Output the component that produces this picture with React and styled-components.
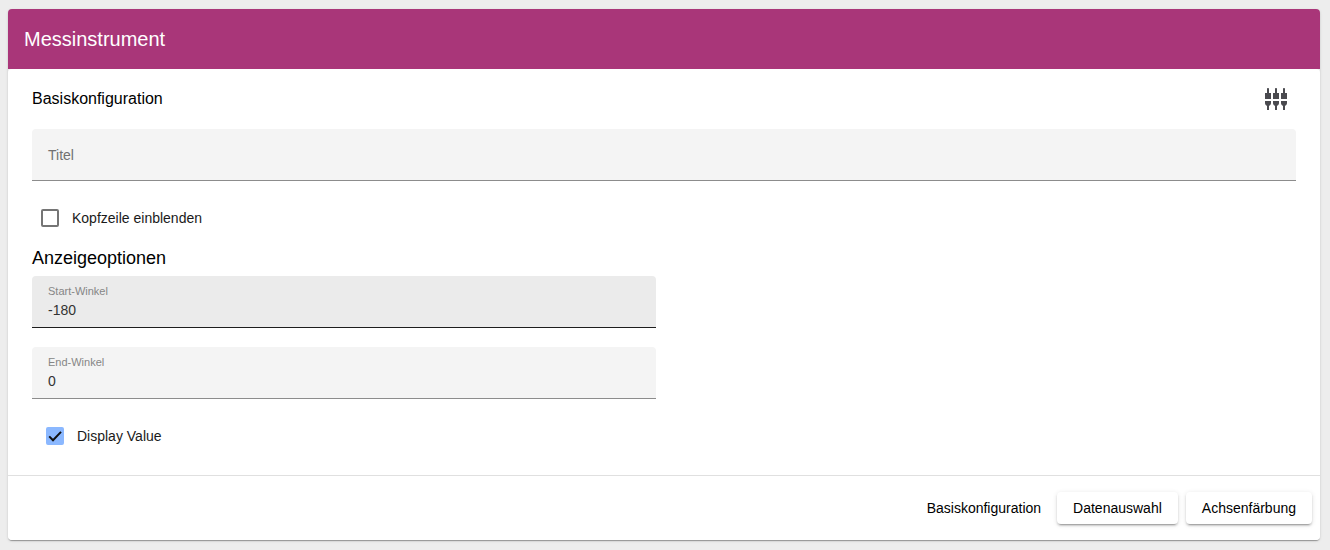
import React, { useState } from "react";
import styled, { createGlobalStyle, css } from "styled-components";
import { MdSettingsInputComponent } from "react-icons/md";

const GlobalStyle = createGlobalStyle`
  *, *::before, *::after { box-sizing: border-box; }
  body {
    margin: 0;
    background: #ededed;
    color: #000;
    font-family: "Liberation Sans", Arial, sans-serif;
    font-size: 14px;
  }
`;

const Page = styled.main`
  padding: 9px 10px 9px 8px;
`;

const Card = styled.section`
  border-radius: 4px;
  box-shadow: 0 2px 1px -1px rgba(0, 0, 0, 0.2), 0 1px 1px rgba(0, 0, 0, 0.14),
    0 1px 3px rgba(0, 0, 0, 0.12);
`;

const Header = styled.header`
  display: flex;
  align-items: center;
  height: 60px;
  padding: 0 16px;
  border-radius: 4px 4px 0 0;
  background: #a93679;
  color: #fff;
`;

const Title = styled.h1`
  margin: 0;
  font-size: 20px;
  font-weight: 400;
  line-height: 32px;
`;

const Panel = styled.div`
  border-radius: 4px;
  background: #fff;
`;

const Content = styled.div`
  padding: 10px 24px 19px;
`;

const TopRow = styled.div`
  display: flex;
  align-items: center;
  justify-content: space-between;
  height: 40px;
  margin-bottom: 10px;
`;

const StepTitle = styled.h2`
  margin: 0;
  font-size: 16px;
  font-weight: 400;
  line-height: 24px;
`;

const IconButton = styled.button`
  display: grid;
  place-items: center;
  width: 40px;
  height: 40px;
  padding: 0;
  border: 0;
  background: transparent;
  color: #4a4a4f;
`;

const SectionTitle = styled.h3`
  margin: 2px 0 0;
  font-size: 18px;
  font-weight: 400;
  line-height: 36px;
`;

const FieldBox = styled.div`
  display: grid;
  align-content: center;
  height: 52px;
  padding: 0 16px ${(p) => (p.$resting ? "0" : "1px")};
  border-bottom: 1px solid ${(p) => (p.$active ? "#1e1e1e" : "#8c8c8c")};
  border-radius: 4px 4px 0 0;
  background: ${(p) => (p.$active ? "#ebebeb" : "#f4f4f4")};
`;

const FieldLabel = styled.label`
  color: #868686;
  font-size: 11px;
  line-height: 17px;

  ${(p) =>
    p.$resting &&
    css`
      grid-area: 1 / 1;
      color: #717171;
      font-size: 14px;
      line-height: 20px;
      pointer-events: none;
    `}
`;

const FieldInput = styled.input`
  width: 100%;
  height: 20px;
  padding: 0;
  border: 0;
  outline: 0;
  background: transparent;
  color: #333;
  font: inherit;
  line-height: 20px;
  ${(p) => p.$resting && "grid-area: 1 / 1;"}
`;

const HalfColumn = styled.div`
  display: grid;
  gap: 19px;
  width: calc(50% - 8px);
`;

const CheckRow = styled.label`
  display: flex;
  align-items: center;
  gap: 13px;
  height: 40px;
  padding-left: ${(p) => (p.$inset ? "14px" : "9px")};
  margin-top: 17px;
  color: #1a1a1a;
  line-height: 20px;
`;

const CheckMark = styled.span`
  display: grid;
  width: 18px;
  height: 18px;

  > * {
    grid-area: 1 / 1;
  }

  svg {
    width: 18px;
    height: 18px;
    pointer-events: none;
  }
`;

const CheckInput = styled.input`
  appearance: none;
  width: 18px;
  height: 18px;
  margin: 0;
  border: 2px solid #757575;
  border-radius: 2px;
  background: #fff;

  &:checked {
    border-color: #8bb8ff;
    background: #8bb8ff;
  }
`;

const Footer = styled.footer`
  display: flex;
  align-items: center;
  justify-content: flex-end;
  gap: 8px;
  padding: 16px 8px;
  border-top: 1px solid #e0e0e0;
`;

const StepButton = styled.button`
  height: 32px;
  padding: 0 ${(p) => (p.$current ? "8px" : "16px")};
  border: 0;
  border-radius: 4px;
  background: #fff;
  color: #000;
  font: inherit;
  line-height: 32px;
  ${(p) =>
    !p.$current &&
    css`
      box-shadow: 0 3px 1px -2px rgba(0, 0, 0, 0.2),
        0 2px 2px rgba(0, 0, 0, 0.14), 0 1px 5px rgba(0, 0, 0, 0.12);
    `}
`;

function Field({ id, label, initial = "", active }) {
  const [value, setValue] = useState(initial);
  const resting = value === "";
  return (
    <FieldBox $active={active} $resting={resting}>
      <FieldLabel htmlFor={id} $resting={resting}>
        {label}
      </FieldLabel>
      <FieldInput
        id={id}
        value={value}
        $resting={resting}
        onChange={(e) => setValue(e.target.value)}
      />
    </FieldBox>
  );
}

function Check({ label, initial = false, inset }) {
  const [checked, setChecked] = useState(initial);
  return (
    <CheckRow $inset={inset}>
      <CheckMark>
        <CheckInput
          type="checkbox"
          checked={checked}
          onChange={(e) => setChecked(e.target.checked)}
        />
        {checked && (
          <svg viewBox="0 0 18 18" aria-hidden="true">
            <path
              d="M3.2 9.4 7 13.2 15 4.9"
              fill="none"
              stroke="#111"
              strokeWidth="2"
            />
          </svg>
        )}
      </CheckMark>
      {label}
    </CheckRow>
  );
}

export default function App() {
  return (
    <>
      <GlobalStyle />
      <Page>
        <Card>
          <Header>
            <Title>Messinstrument</Title>
          </Header>
          <Panel>
            <Content>
              <TopRow>
                <StepTitle>Basiskonfiguration</StepTitle>
                <IconButton type="button" aria-label="Basiskonfiguration">
                  <MdSettingsInputComponent size={24} />
                </IconButton>
              </TopRow>
              <Field id="titel" label="Titel" />
              <Check label="Kopfzeile einblenden" />
              <SectionTitle>Anzeigeoptionen</SectionTitle>
              <HalfColumn>
                <Field id="start" label="Start-Winkel" initial="-180" active />
                <Field id="end" label="End-Winkel" initial="0" />
              </HalfColumn>
              <Check label="Display Value" initial inset />
            </Content>
            <Footer>
              <StepButton type="button" $current>
                Basiskonfiguration
              </StepButton>
              <StepButton type="button">Datenauswahl</StepButton>
              <StepButton type="button">Achsenfärbung</StepButton>
            </Footer>
          </Panel>
        </Card>
      </Page>
    </>
  );
}
